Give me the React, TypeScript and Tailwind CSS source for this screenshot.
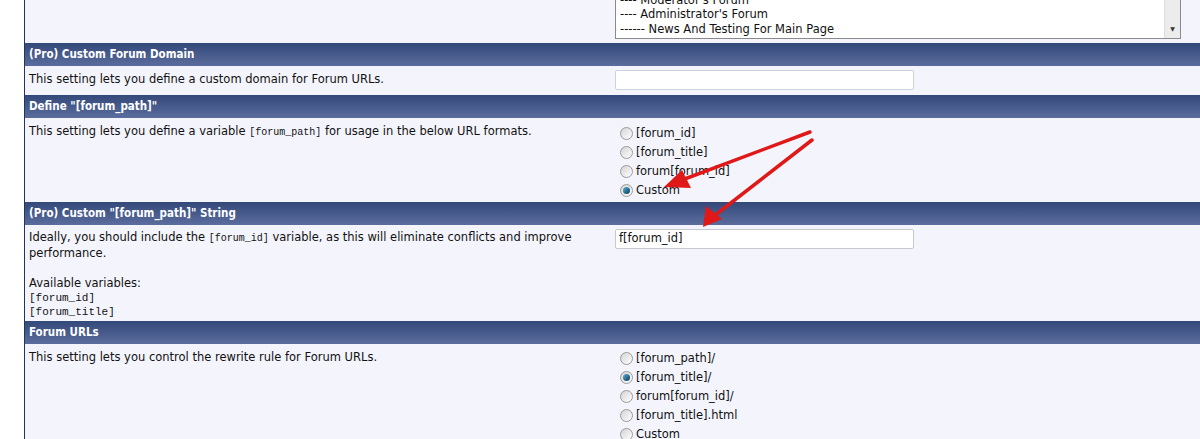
import React from "react";

const body = { fontFamily: '"DejaVu Sans", Verdana, sans-serif' };
const head = { fontFamily: '"DejaVu Sans Condensed", "DejaVu Sans", Verdana, sans-serif' };
const mono = { fontFamily: '"Liberation Mono", "Courier New", monospace' };

function Header({ title }: { title: string }) {
  return (
    <div className="h-[23px] flex items-center pl-[4px] bg-gradient-to-b from-[#33497a] to-[#5b6d9d] text-white font-bold text-[11.5px]" style={head}>
      {title}
    </div>
  );
}

function Radio({ checked, label }: { checked?: boolean; label: string }) {
  return (
    <div className="flex items-center h-[19px]">
      <span className="w-[13px] h-[13px] rounded-full border border-[#9a9a9a] bg-gradient-to-br from-[#d4d4d4] to-[#ffffff] flex items-center justify-center mr-[3px]">
        {checked && <span className="w-[7px] h-[7px] rounded-full bg-gradient-to-br from-[#5ab0d8] to-[#0e3a5c]" />}
      </span>
      <span className="text-[11.5px] text-[#111]">{label}</span>
    </div>
  );
}

export default function App() {
  return (
    <div className="relative w-[1200px] h-[439px] overflow-hidden bg-white" style={body}>
      <div className="ml-[24px] border-l border-[#223560] bg-[#f4f5fc] text-[11.5px] text-[#111] h-full">
        {/* top row with list box */}
        <div className="flex h-[43px]">
          <div className="w-[590px]" />
          <div className="w-[566px] h-[39px] border border-[#8a8a8a] border-t-0 bg-white flex">
            <div className="flex-1 pl-[4px] pb-[1px] leading-[15px] flex flex-col justify-end overflow-hidden">
              <div className="h-[8px] leading-[0px]">---- Moderator's Forum</div>
              <div>---- Administrator's Forum</div>
              <div>------ News And Testing For Main Page</div>
            </div>
            <div className="w-[16px] bg-[#ececec] border-l border-[#dcdcdc] flex items-end justify-center pb-[6px]">
              <span className="text-[6px] leading-none text-[#333]">▼</span>
            </div>
          </div>
        </div>

        <Header title="(Pro) Custom Forum Domain" />
        <div className="flex h-[29px]">
          <div className="w-[590px] pl-[4px] pt-[5px]">This setting lets you define a custom domain for Forum URLs.</div>
          <div className="pt-[4px]">
            <div className="w-[299px] h-[20px] border border-[#d0d0d8] rounded-[2px] bg-white" />
          </div>
        </div>

        <Header title={'Define "[forum_path]"'} />
        <div className="flex h-[84px]">
          <div className="w-[590px] pl-[4px] pt-[5px]">
            This setting lets you define a variable <span className="text-[10px]" style={mono}>[forum_path]</span> for usage in the below URL formats.
          </div>
          <div className="pl-[5px] pt-[6px]">
            <Radio label="[forum_id]" />
            <Radio label="[forum_title]" />
            <Radio label="forum[forum_id]" />
            <Radio checked label="Custom" />
          </div>
        </div>

        <Header title={'(Pro) Custom "[forum_path]" String'} />
        <div className="flex h-[96px]">
          <div className="w-[590px] pl-[4px] pt-[5px] leading-[15px]">
            <div>
              Ideally, you should include the <span className="text-[10px]" style={mono}>[forum_id]</span> variable, as this will eliminate conflicts and improve
              <br />
              performance.
            </div>
            <div className="mt-[15px]">Available variables:</div>
            <div className="text-[11px] leading-[14px]" style={mono}>[forum_id]</div>
            <div className="text-[11px] leading-[14px]" style={mono}>[forum_title]</div>
          </div>
          <div className="pt-[4px]">
            <div className="w-[299px] h-[20px] border border-[#c8c8d0] rounded-[2px] bg-white pl-[3px] flex items-center">f[forum_id]</div>
          </div>
        </div>

        <Header title="Forum URLs" />
        <div className="flex h-[120px]">
          <div className="w-[590px] pl-[4px] pt-[5px]">This setting lets you control the rewrite rule for Forum URLs.</div>
          <div className="pl-[5px] pt-[5px]">
            <Radio label="[forum_path]/" />
            <Radio checked label="[forum_title]/" />
            <Radio label="forum[forum_id]/" />
            <Radio label="[forum_title].html" />
            <Radio label="Custom" />
          </div>
        </div>
      </div>

      <svg className="absolute left-0 top-0 pointer-events-none" width="1200" height="439">
        <g stroke="#e01818" strokeWidth="3.5" strokeLinecap="round" fill="none">
          <line x1="810" y1="132" x2="682" y2="180" />
          <line x1="812" y1="140" x2="714" y2="216" />
        </g>
        <g fill="#e01818">
          <polygon points="664,187 682,170 691,188" />
          <polygon points="703,227 706,206 722,219" />
        </g>
      </svg>
    </div>
  );
}
